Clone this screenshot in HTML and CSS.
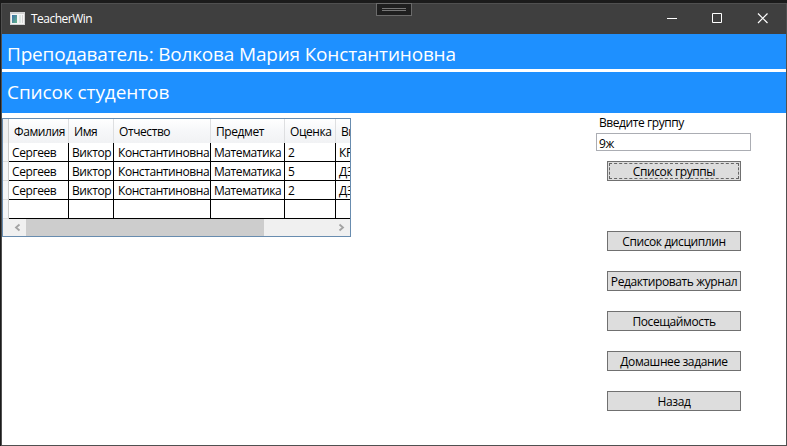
FILE: index.html
```html
<!DOCTYPE html>
<html lang="ru">
<head>
<meta charset="utf-8">
<title>TeacherWin</title>
<link rel="stylesheet" href="styles.css">
</head>
<body>
<div class="window">
  <header class="titlebar">
    <svg class="app-icon" width="15" height="13" viewBox="0 0 15 13" shape-rendering="crispEdges">
      <defs><linearGradient id="g" x1="0" y1="0" x2="1" y2="1"><stop offset="0" stop-color="#3b6ea8"/><stop offset="1" stop-color="#65b58c"/></linearGradient></defs>
      <rect width="15" height="13" fill="#d2d2d2"/><rect x="1" y="2" width="13" height="10" fill="#f5f5f5"/>
      <rect x="2" y="3" width="5" height="8" fill="url(#g)"/><rect x="9" y="3" width="2" height="8" fill="#dde6e2"/><rect x="12" y="3" width="1" height="8" fill="#d5d5d5"/>
    </svg>
    <span class="app-name">TeacherWin</span>
    <div class="debug-tab"><i></i><i></i></div>
    <svg class="controls" width="138" height="30" viewBox="0 0 138 30" fill="none" stroke="#fff">
      <path d="M19 14.500h10M64.500 9.500h9v9h-9z"/><path stroke-width="1.200" d="M110 9.500l9.500 9.500M119.500 9.500l-9.500 9.500"/>
    </svg>
  </header>
  <h1 class="banner teacher"><span>Преподаватель: Волкова Мария Константиновна</span></h1>
  <h2 class="banner students"><span>Список студентов</span></h2>
  <main class="content">
    <section class="datagrid">
      <div class="row head"><b></b><span>Фамилия</span><span>Имя</span><span>Отчество</span><span>Предмет</span><span>Оценка</span><span>Вид</span></div>
      <div class="row"><b></b><span>Сергеев</span><span>Виктор</span><span>Константиновна</span><span>Математика</span><span>2</span><span>КР</span></div>
      <div class="row"><b></b><span>Сергеев</span><span>Виктор</span><span>Константиновна</span><span>Математика</span><span>5</span><span>ДЗ</span></div>
      <div class="row"><b></b><span>Сергеев</span><span>Виктор</span><span>Константиновна</span><span>Математика</span><span>2</span><span>ДЗ</span></div>
      <div class="row"><b></b><span></span><span></span><span></span><span></span><span></span><span></span></div>
      <div class="scrollbar">
        <svg width="17" height="17" viewBox="0 0 17 17" fill="none" stroke="#a3a3a3" stroke-width="1.800"><path d="M10.500 5.500l-3.500 3 3.500 3"/></svg>
        <div class="thumb"></div>
        <svg width="17" height="17" viewBox="0 0 17 17" fill="none" stroke="#a3a3a3" stroke-width="1.800"><path d="M6.500 5.500l3.500 3-3.500 3"/></svg>
      </div>
    </section>
    <aside class="side">
      <label for="group">Введите группу</label>
      <input id="group" value="9ж">
      <button class="focused"><span>Список группы</span></button>
      <button class="second">Список дисциплин</button>
      <button>Редактировать журнал</button>
      <button>Посещаймость</button>
      <button>Домашнее задание</button>
      <button>Назад</button>
    </aside>
  </main>
</div>
</body>
</html>
```
FILE: styles.css
```css
* { box-sizing: border-box; }
body {
  margin: 0;
  height: 446px;
  padding: 3px 0 0 1px;
  overflow: hidden;
  background: #1b1b1b;
  font: 12px/16px "Open Sans", "Noto Sans", sans-serif;
  color: #000;
}
.window {
  width: 786px;
  height: 443px;
  border: 1px solid #505050;
  background: #fff;
}
.titlebar {
  position: relative;
  display: flex;
  align-items: center;
  height: 30px;
  padding-left: 8px;
  background: #3f3f3f;
  color: #fff;
}
.app-icon { margin-bottom: 2px; }
.app-name { margin: 0 auto 1px 6px; letter-spacing: -0.520px; }
.debug-tab {
  position: absolute;
  left: 374px;
  top: -1px;
  width: 36px;
  height: 13px;
  padding: 4px 5px;
  border: 1px solid #6b6b6b;
  background: #1f1f1f;
}
.debug-tab i { display: block; height: 1px; margin-bottom: 1px; background: #777; }
.banner {
  margin: 0;
  padding-left: 5px;
  background: #1e90ff;
  color: #fff;
  font-size: 19px;
  font-weight: 400;
  white-space: nowrap;
}
.teacher { height: 35px; line-height: 40px; letter-spacing: -0.180px; }
.students { height: 41px; margin-top: 3px; line-height: 40px; letter-spacing: -0.080px; }
.content { display: flex; justify-content: space-between; }
.datagrid {
  width: 349px;
  height: 119px;
  margin-top: 5px;
  border: 1px solid #688caf;
  background: #f0f0f0;
  overflow: hidden;
}
.row {
  display: grid;
  grid-template-columns: 6px 60px 45px 97px 74px 51px 14px;
  height: 19px;
}
.row b { border-right: 1px solid #c9caca; border-bottom: 1px solid #ddd; background: #f5f6f7; }
.row span {
  padding-left: 3px;
  border-right: 1px solid #000;
  border-bottom: 1px solid #000;
  background: #fff;
  line-height: 20px;
  letter-spacing: -0.420px;
  white-space: nowrap;
  overflow: hidden;
}
.row span:nth-of-type(3) { padding-left: 4px; }
.row span:last-child { border-right: 0; }
.head { height: 24px; background: linear-gradient(#fff, #f7f8fa 45%, #f1f2f4); }
.head b { border-bottom: 0; background: #f0f0f0; }
.head span, .head span:nth-of-type(3) { padding-left: 5px; border-bottom: 0; border-right-color: #dedfe1; background: none; line-height: 25px; }
.scrollbar { display: flex; height: 17px; padding-left: 6px; background: #f0f0f0; }
.thumb { width: 238px; margin-right: 69px; background: #cdcdcd; }
.scrollbar svg { flex: none; }
.side {
  display: flex;
  flex-direction: column;
  align-items: flex-start;
  width: 190px;
  padding-top: 2px;
}
.side label { height: 18px; margin-left: 3px; letter-spacing: -0.420px; }
.side input {
  width: 155px;
  height: 18px;
  padding: 2px 2px 0;
  border: 1px solid #abadb3;
  font: inherit;
  letter-spacing: -0.400px;
}
.side button {
  width: 134px;
  height: 20px;
  margin: 0 0 20px 11px;
  padding: 0;
  border: 1px solid #707070;
  background: #ddd;
  color: #000;
  font: inherit;
  line-height: 19px;
  letter-spacing: -0.400px;
  white-space: nowrap;
}
.side .focused { margin-top: 10px; padding: 1px; }
.focused span { display: block; height: 16px; line-height: 17px; outline: 1px dashed #666; outline-offset: -1px; }
.side .second { margin-top: 30px; }
```
